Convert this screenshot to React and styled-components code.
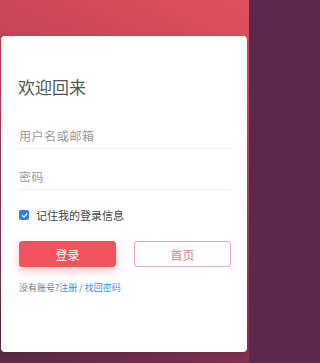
import styled, { createGlobalStyle } from "styled-components";

const GlobalStyle = createGlobalStyle`
  html, body {
    margin: 0;
    padding: 0;
    background: #5a2848;
  }
  body {
    font-family: "Noto Sans CJK SC", "Noto Sans", sans-serif;
  }
`;

const Page = styled.div`
  width: 249px;
  height: 363px;
  box-sizing: border-box;
  padding: 36px 2px 0 1px;
  background: linear-gradient(205deg, #e2505e 0%, #c8475a 28%, #9a3652 60%, #5a2848 100%);
  overflow: hidden;
`;

const Card = styled.div`
  height: 316px;
  box-sizing: border-box;
  padding: 39px 16px 0 17px;
  background: #fff;
  border-radius: 4px;
  box-shadow: 0 2px 6px rgba(0, 0, 0, 0.12);
  display: flex;
  flex-direction: column;
`;

const Title = styled.h1`
  margin: 0;
  font-size: 17px;
  line-height: 24px;
  font-weight: 400;
  color: #555;
`;

const Field = styled.input`
  display: block;
  width: 100%;
  height: 27px;
  box-sizing: border-box;
  margin-top: ${(p) => p.$gap}px;
  padding: 0 0 0 1px;
  border: none;
  border-bottom: 1px solid #eeeeee;
  outline: none;
  font-family: inherit;
  font-size: 12px;
  letter-spacing: 0.6px;
  color: #444;
  background: transparent;

  &::placeholder {
    color: #9a9a9a;
  }
`;

const Remember = styled.label`
  display: flex;
  align-items: center;
  gap: 7px;
  margin-top: 18px;
  height: 14px;
  padding-left: 1px;
  font-size: 11px;
  color: #444;
`;

const Check = styled.span`
  width: 10px;
  height: 10px;
  border-radius: 2px;
  background: #2f80ed;
  display: flex;
  align-items: center;
  justify-content: center;
`;

const Buttons = styled.div`
  display: flex;
  gap: 18px;
  margin-top: 19px;
  padding-left: 1px;
`;

const Button = styled.button`
  width: 98px;
  height: 26px;
  box-sizing: border-box;
  border-radius: 3px;
  font-family: inherit;
  font-size: 12px;
  cursor: pointer;
  border: 1px solid ${(p) => (p.$primary ? "#f0535d" : "#e6a8b0")};
  background: ${(p) => (p.$primary ? "#f0535d" : "#fff")};
  color: ${(p) => (p.$primary ? "#fff" : "#de7f8b")};
  box-shadow: ${(p) => (p.$primary ? "0 4px 10px rgba(240, 83, 93, 0.35)" : "none")};
`;

const Footer = styled.p`
  margin: 15px 0 0;
  padding-left: 1px;
  font-size: 9px;
  line-height: 12px;
  color: #777;
`;

const Link = styled.a`
  color: #3d8fe0;
  text-decoration: none;
`;

export default function App() {
  return (
    <>
      <GlobalStyle />
      <Page>
        <Card>
          <Title>欢迎回来</Title>
          <Field $gap={23} placeholder="用户名或邮箱" />
          <Field $gap={14} type="password" placeholder="密码" />
          <Remember>
            <Check>
              <svg width="7" height="7" viewBox="0 0 10 10">
                <path d="M2 5.2 L4.2 7.3 L8.2 2.8" fill="none" stroke="#fff" strokeWidth="1.8" strokeLinecap="round" strokeLinejoin="round" />
              </svg>
            </Check>
            记住我的登录信息
          </Remember>
          <Buttons>
            <Button $primary>登录</Button>
            <Button>首页</Button>
          </Buttons>
          <Footer>
            没有账号?<Link href="#">注册</Link> / <Link href="#">找回密码</Link>
          </Footer>
        </Card>
      </Page>
    </>
  );
}
